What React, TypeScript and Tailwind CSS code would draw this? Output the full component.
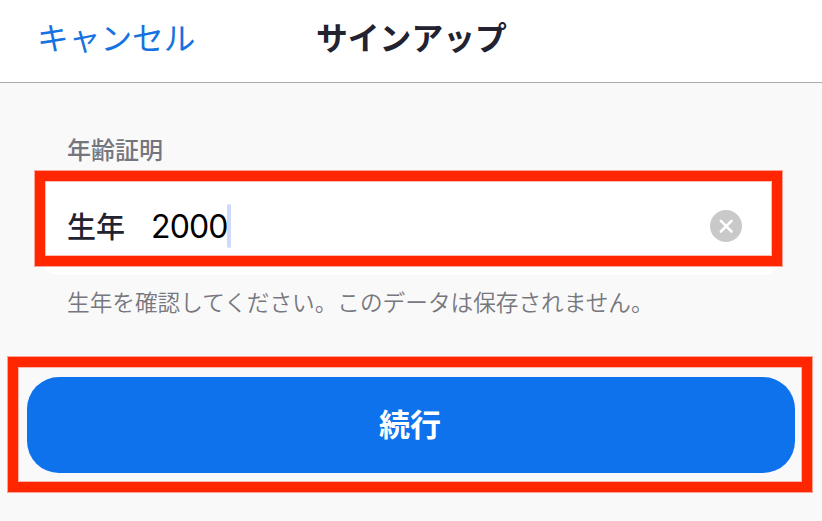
import React from 'react';

const font = "font-['Noto_Sans_CJK_JP',sans-serif]";

const ClearIcon: React.FC = () => (
  <svg viewBox="0 0 32 32" className="size-8">
    <circle cx="16" cy="16" r="16" fill="#c9c9c9" />
    <path d="M10.9 10.9l10.6 10.6M21.5 10.9l-10.6 10.6" stroke="#fff" strokeWidth="2.6" strokeLinecap="round" />
  </svg>
);

export default function App() {
  return (
    <div className={`h-[521px] w-[822px] overflow-hidden bg-[#f9f9f9] ${font}`}>
      <header className="grid h-[83px] grid-cols-[316px_200px_1fr] border-b border-[#acacae] bg-white whitespace-nowrap">
        <button className="h-[72px] pl-[37px] text-left text-[31.7px] leading-[72px] text-[#1672e0]">キャンセル</button>
        <h1 className="h-[72px] text-[31.8px] leading-[72px] font-bold text-[#222230]">サインアップ</h1>
      </header>

      <main>
        <label className="block h-[88px] pt-[48px] pl-[67px] text-[24px] leading-[36px] font-medium text-[#75757d]">年齢証明</label>
        <section className="mx-10 h-[104px] rounded-b-[20px] bg-white">
          <div className="-ml-[5px] flex h-[95px] w-[747px] items-center border-[10px] border-[#ff2600] bg-white pt-[15px] pr-[30px] pl-[22px] ring-1 inset-ring-1 ring-[#ff2600]/40 inset-ring-[#ff2600]/30">
            <span className="-mt-[2px] text-[29px] leading-[44px] font-medium text-[#222230]">生年</span>
            <span className="mt-[1px] ml-[26px] font-['Inter'] text-[32px] leading-[44px] tracking-[-0.9px] text-black">2000</span>
            <span className="-ml-[1px] h-[44px] w-1 rounded-full bg-[#cfd9fc]" />
            <button className="ml-auto">
              <ClearIcon />
            </button>
          </div>
        </section>
        <p className="h-[82px] pt-[9px] pl-[67px] text-[22.65px] leading-[36px] font-[350] whitespace-nowrap text-[#77777d]">
          生年を確認してください。このデータは保存されません。
        </p>
        <div className="ml-[8px] h-[135px] w-[804px] border-[10px] border-[#ff2600] px-[9px] py-[10px] ring-1 inset-ring-1 ring-[#ff2600]/40 inset-ring-[#ff2600]/30">
          <button className="h-24 w-[768px] rounded-[32px] bg-[#0e72ed] pr-[2px] pb-[3px] text-[31px] font-bold text-white">続行</button>
        </div>
      </main>
    </div>
  );
}
